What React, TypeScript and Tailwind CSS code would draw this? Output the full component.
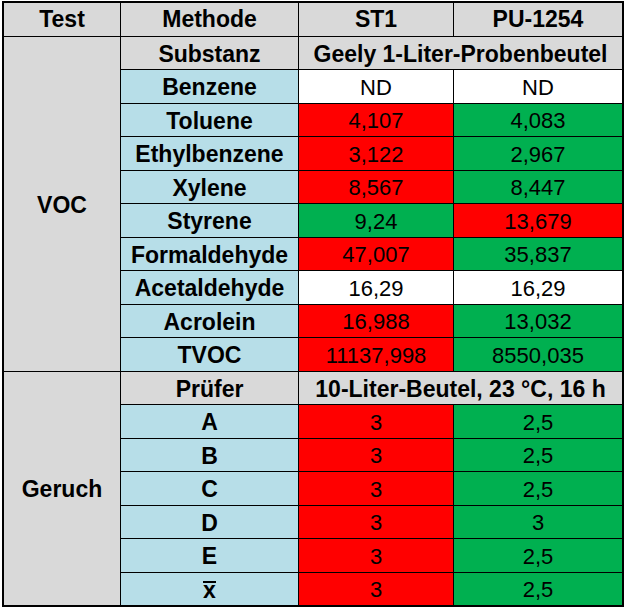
import React from "react";

type Row = { name: string; st1: string; pu: string; c1: string; c2: string };

const RED = "bg-[#ff0000]";
const GREEN = "bg-[#00b050]";
const WHITE = "bg-white";

const voc: Row[] = [
  { name: "Benzene", st1: "ND", pu: "ND", c1: WHITE, c2: WHITE },
  { name: "Toluene", st1: "4,107", pu: "4,083", c1: RED, c2: GREEN },
  { name: "Ethylbenzene", st1: "3,122", pu: "2,967", c1: RED, c2: GREEN },
  { name: "Xylene", st1: "8,567", pu: "8,447", c1: RED, c2: GREEN },
  { name: "Styrene", st1: "9,24", pu: "13,679", c1: GREEN, c2: RED },
  { name: "Formaldehyde", st1: "47,007", pu: "35,837", c1: RED, c2: GREEN },
  { name: "Acetaldehyde", st1: "16,29", pu: "16,29", c1: WHITE, c2: WHITE },
  { name: "Acrolein", st1: "16,988", pu: "13,032", c1: RED, c2: GREEN },
  { name: "TVOC", st1: "11137,998", pu: "8550,035", c1: RED, c2: GREEN },
];

const geruch: Row[] = [
  { name: "A", st1: "3", pu: "2,5", c1: RED, c2: GREEN },
  { name: "B", st1: "3", pu: "2,5", c1: RED, c2: GREEN },
  { name: "C", st1: "3", pu: "2,5", c1: RED, c2: GREEN },
  { name: "D", st1: "3", pu: "3", c1: RED, c2: GREEN },
  { name: "E", st1: "3", pu: "2,5", c1: RED, c2: GREEN },
];

// body cells sit a touch lower than the header row
const cell = "flex items-center justify-center whitespace-nowrap pt-[3px] text-[22px]";
const top = "flex items-center justify-center whitespace-nowrap bg-[#d9d9d9] font-bold text-[23px]";
const head = `${top} pt-[3px]`;
const label = "flex items-center justify-center whitespace-nowrap pt-[3px] bg-[#b7dee8] font-bold text-[23px]";

export default function App() {
  return (
    <div className="pl-[2px] pt-[1px] bg-white min-h-screen">
      <div
        className="grid grid-cols-[116px_177px_154px_168px] grid-rows-[repeat(18,minmax(0,1fr))] gap-px bg-black border-2 border-black w-[622px] h-[606px] text-black leading-none"
        style={{ fontFamily: '"Liberation Sans", Arial, sans-serif' }}
      >
        <div className={top}>Test</div>
        <div className={top}>Methode</div>
        <div className={top}>ST1</div>
        <div className={top}>PU-1254</div>

        <div className={`${head} row-span-10`}>VOC</div>
        <div className={head}>Substanz</div>
        <div className={`${head} col-span-2`}>Geely 1-Liter-Probenbeutel</div>
        {voc.map((r) => (
          <React.Fragment key={r.name}>
            <div className={label}>{r.name}</div>
            <div className={`${cell} ${r.c1}`}>{r.st1}</div>
            <div className={`${cell} ${r.c2}`}>{r.pu}</div>
          </React.Fragment>
        ))}

        <div className={`${head} row-span-7`}>Geruch</div>
        <div className={head}>Prüfer</div>
        <div className={`${head} col-span-2`}>10-Liter-Beutel, 23 °C, 16 h</div>
        {geruch.map((r) => (
          <React.Fragment key={r.name}>
            <div className={label}>{r.name}</div>
            <div className={`${cell} ${r.c1}`}>{r.st1}</div>
            <div className={`${cell} ${r.c2}`}>{r.pu}</div>
          </React.Fragment>
        ))}
        <div className={label}>
          <span className="relative inline-block">
            x
            <span className="absolute left-0 right-0 top-[2px] h-[2px] bg-black" />
          </span>
        </div>
        <div className={`${cell} ${RED}`}>3</div>
        <div className={`${cell} ${GREEN}`}>2,5</div>
      </div>
    </div>
  );
}
